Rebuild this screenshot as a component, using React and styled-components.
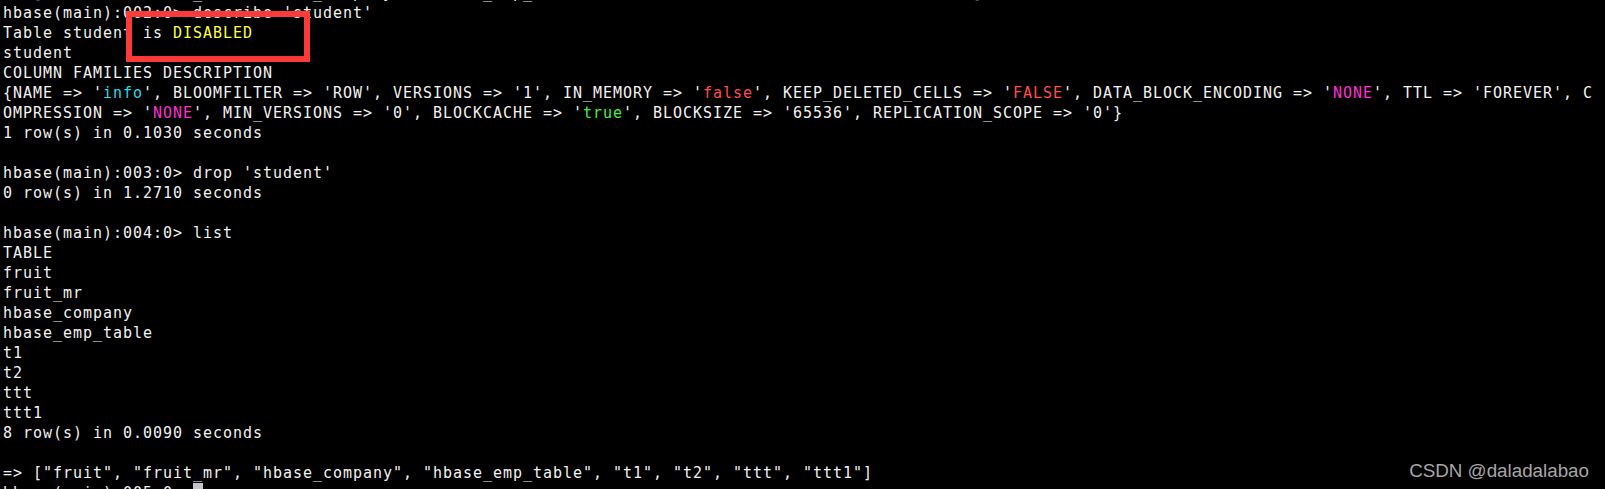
import React from "react";
import styled, { createGlobalStyle } from "styled-components";

const GlobalStyle = createGlobalStyle`
  html, body {
    margin: 0;
    padding: 0;
    background: #000;
    overflow: hidden;
  }
`;

const Screen = styled.div`
  position: relative;
  width: 1605px;
  height: 489px;
  background: #000;
  overflow: hidden;
`;

const Terminal = styled.div`
  margin-top: -17px;
  padding-left: 3px;
  font-family: "DejaVu Sans Mono", monospace;
  font-size: 15px;
  letter-spacing: 0.969px;
  line-height: 20px;
  color: #f2f2f2;
`;

const Line = styled.div`
  height: 20px;
  white-space: pre;
`;

const toneColors = {
  plain: "#f2f2f2",
  cyan: "#25d8ea",
  red: "#ff4d4d",
  magenta: "#ff2ed2",
  green: "#3ff03f",
  yellow: "#ffff3c",
};

const Token = styled.span`
  color: ${(p) => toneColors[p.$tone] || toneColors.plain};
`;

const Cursor = styled.span`
  display: inline-block;
  width: 10px;
  height: 20px;
  vertical-align: top;
  background: #c4c4c8;
`;

const HighlightBox = styled.div`
  position: absolute;
  left: 126px;
  top: 11px;
  width: 184px;
  height: 51px;
  box-sizing: border-box;
  border: 6px solid #fb3a3a;
  pointer-events: none;
`;

const Watermark = styled.div`
  position: absolute;
  right: 16px;
  top: 460px;
  font-family: "Liberation Sans", Arial, sans-serif;
  font-size: 18.8px;
  line-height: 22px;
  color: #a6a6a6;
`;

const P = (t) => [t, "plain"];

const lines = [
  [P('=> ["fruit", "fruit_mr", "hbase_company", "hbase_emp_table", "student", "t1", "t2", "ttt", "ttt1"]')],
  [P("hbase(main):002:0> describe 'student'")],
  [P("Table student is "), ["DISABLED", "yellow"]],
  [P("student")],
  [P("COLUMN FAMILIES DESCRIPTION")],
  [
    P("{NAME => '"),
    ["info", "cyan"],
    P("', BLOOMFILTER => 'ROW', VERSIONS => '1', IN_MEMORY => '"),
    ["false", "red"],
    P("', KEEP_DELETED_CELLS => '"),
    ["FALSE", "red"],
    P("', DATA_BLOCK_ENCODING => '"),
    ["NONE", "magenta"],
    P("', TTL => 'FOREVER', C"),
  ],
  [
    P("OMPRESSION => '"),
    ["NONE", "magenta"],
    P("', MIN_VERSIONS => '0', BLOCKCACHE => '"),
    ["true", "green"],
    P("', BLOCKSIZE => '65536', REPLICATION_SCOPE => '0'}"),
  ],
  [P("1 row(s) in 0.1030 seconds")],
  [P("")],
  [P("hbase(main):003:0> drop 'student'")],
  [P("0 row(s) in 1.2710 seconds")],
  [P("")],
  [P("hbase(main):004:0> list")],
  [P("TABLE")],
  [P("fruit")],
  [P("fruit_mr")],
  [P("hbase_company")],
  [P("hbase_emp_table")],
  [P("t1")],
  [P("t2")],
  [P("ttt")],
  [P("ttt1")],
  [P("8 row(s) in 0.0090 seconds")],
  [P("")],
  [P('=> ["fruit", "fruit_mr", "hbase_company", "hbase_emp_table", "t1", "t2", "ttt", "ttt1"]')],
];

export default function App() {
  return (
    <>
      <GlobalStyle />
      <Screen>
        <Terminal>
          {lines.map((segs, i) => (
            <Line key={i}>
              {segs.map(([text, tone], j) => (
                <Token key={j} $tone={tone}>
                  {text}
                </Token>
              ))}
            </Line>
          ))}
          <Line>
            <Token $tone="plain">hbase(main):005:0&gt; </Token>
            <Cursor />
          </Line>
        </Terminal>
        <HighlightBox />
        <Watermark>CSDN @daladalabao</Watermark>
      </Screen>
    </>
  );
}
